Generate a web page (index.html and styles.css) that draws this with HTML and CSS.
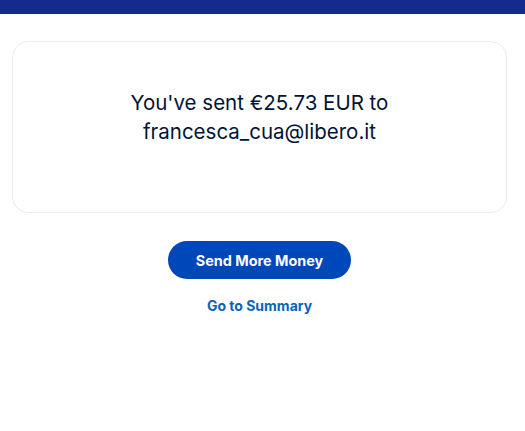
FILE: index.html
```html
<!DOCTYPE html>
<html>
<head>
<meta charset="utf-8">
<link rel="stylesheet" href="styles.css">
</head>
<body>
<div class="topbar"></div>
<main class="main">
  <section class="card">
    <p class="msg">You've sent €25.73 EUR to<br>francesca_cua@libero.it</p>
  </section>
  <div class="actions">
    <button class="btn">Send More Money</button>
    <a class="link" href="#">Go to Summary</a>
  </div>
</main>
</body>
</html>
```
FILE: styles.css
```css
* { box-sizing: border-box; }
html, body { margin: 0; padding: 0; background: #fff; }
body { font-family: Inter, "Noto Sans", sans-serif; }
.topbar { height: 14px; background: #142a8c; }
.main { padding: 27px 18px 0 12px; }
.card {
  height: 172px;
  border: 1px solid #ececec;
  border-radius: 16px;
  display: flex;
  align-items: center;
  justify-content: center;
  padding-bottom: 21px;
}
.msg {
  margin: 0;
  text-align: center;
  font-size: 20.5px;
  line-height: 29px;
  color: #001435;
  font-weight: 400;
}
.actions {
  display: flex;
  flex-direction: column;
  align-items: center;
  padding-top: 28px;
}
.btn {
  width: 183px;
  height: 38px;
  border: none;
  border-radius: 19px;
  background: #0047b9;
  color: #fff;
  font-family: Inter, "Noto Sans", sans-serif;
  font-weight: 700;
  font-size: 14.4px;
}
.link {
  margin-top: 18px;
  font-size: 14px;
  font-weight: 700;
  color: #0964b8;
  text-decoration: none;
}
```
